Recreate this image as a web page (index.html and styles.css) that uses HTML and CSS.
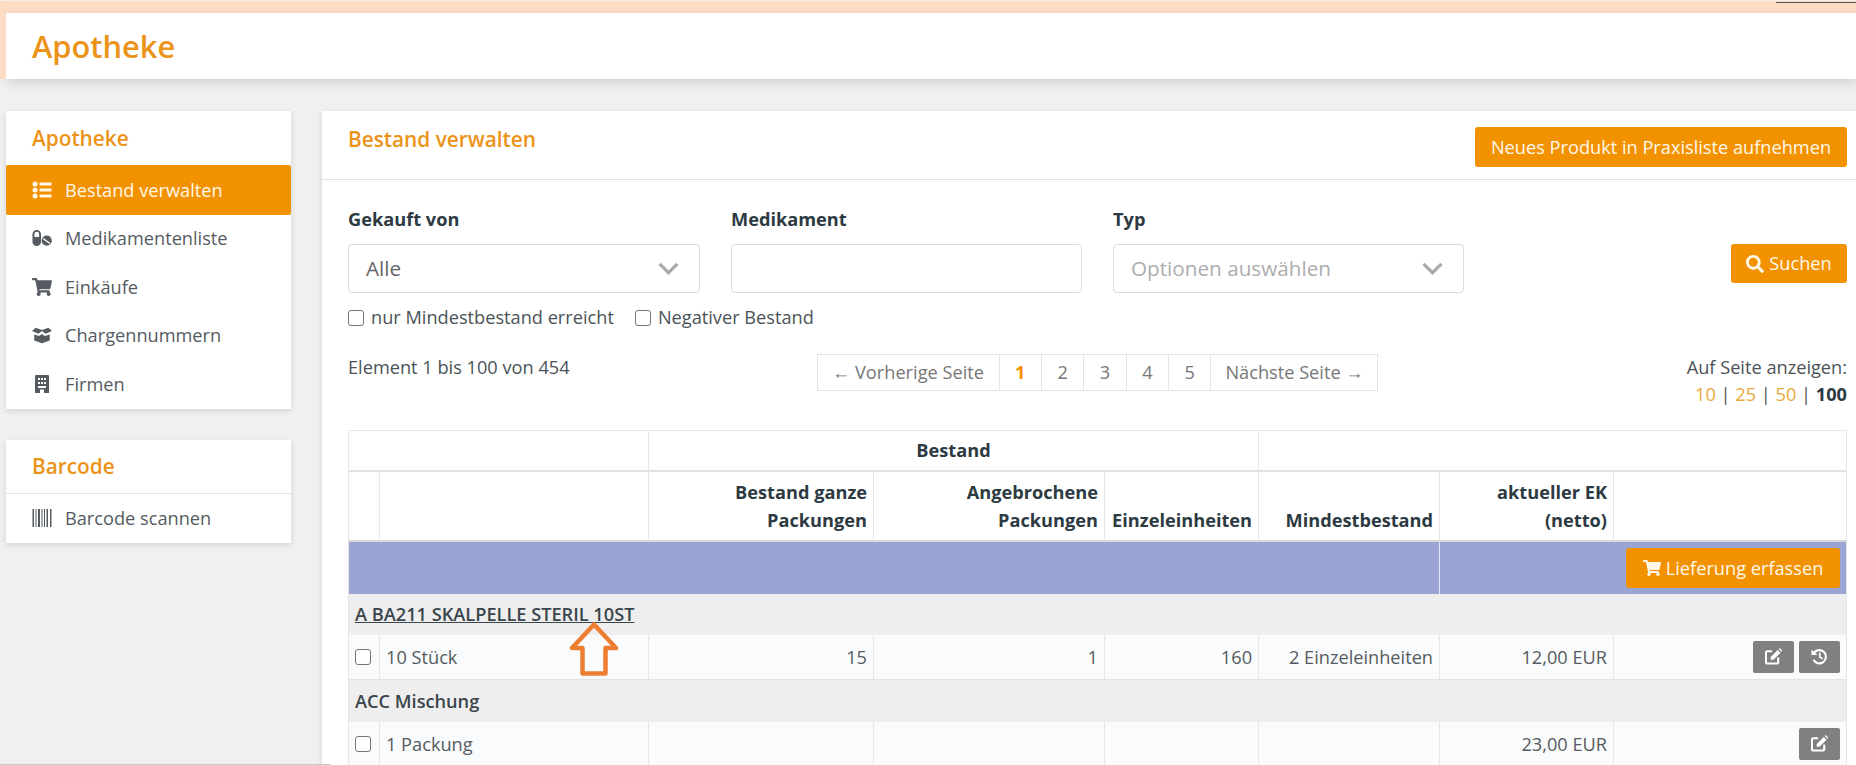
FILE: index.html
```html
<!DOCTYPE html>
<html lang="de">
<head>
<meta charset="utf-8">
<title>Apotheke</title>
<link rel="stylesheet" href="styles.css">
</head>
<body>
<svg class="sprite" aria-hidden="true">
  <symbol id="i-cart" viewBox="0 0 576 512"><path d="M528.12 301.319l47.273-208C578.806 78.301 567.391 64 551.99 64H159.208l-9.166-44.81C147.758 8.021 137.93 0 126.529 0H24C10.745 0 0 10.745 0 24v16c0 13.255 10.745 24 24 24h69.883l70.248 343.435C147.325 417.1 136 435.222 136 456c0 30.928 25.072 56 56 56s56-25.072 56-56c0-15.674-6.447-29.835-16.824-40h209.647C430.447 426.165 424 440.326 424 456c0 30.928 25.072 56 56 56s56-25.072 56-56c0-22.172-12.888-41.332-31.579-50.405l5.517-24.276c3.413-15.018-8.002-29.319-23.403-29.319H218.117l-6.545-32h293.145c11.206 0 20.92-7.754 23.403-18.681z"/></symbol>
  <symbol id="i-search" viewBox="0 0 512 512"><path d="M505 442.7L405.3 343c-4.5-4.5-10.6-7-17-7H372c27.6-35.3 44-79.7 44-128C416 93.1 322.9 0 208 0S0 93.1 0 208s93.1 208 208 208c48.3 0 92.7-16.4 128-44v16.3c0 6.4 2.5 12.5 7 17l99.7 99.7c9.4 9.4 24.6 9.4 33.9 0l28.3-28.3c9.4-9.4 9.4-24.6.1-34zM208 336c-70.7 0-128-57.2-128-128 0-70.7 57.2-128 128-128 70.7 0 128 57.2 128 128 0 70.7-57.2 128-128 128z"/></symbol>
  <symbol id="i-list" viewBox="0 0 20 18"><circle cx="3" cy="3" r="2.5"/><circle cx="3" cy="9" r="2.5"/><circle cx="3" cy="15" r="2.5"/><rect x="7.500" y="1.600" width="12" height="2.800" rx=".6"/><rect x="7.500" y="7.600" width="12" height="2.800" rx=".6"/><rect x="7.500" y="13.600" width="12" height="2.800" rx=".6"/></symbol>
  <symbol id="i-pills" viewBox="0 0 21 18"><path d="M5 0.500a4.500 4.500 0 0 1 4.500 4.500v8a4.500 4.500 0 0 1-9 0v-8a4.500 4.500 0 0 1 4.500-4.500zM2.500 8h5v-3a2.500 2.500 0 0 0-5 0z" fill-rule="evenodd"/><path d="M15.500 6.500a5.300 5.300 0 1 1 0 10.600a5.300 5.300 0 0 1 0-10.600zM12.300 9.300l-.9.9l7 5l.9-.9z" fill-rule="evenodd"/></symbol>
  <symbol id="i-box" viewBox="0 0 22 18"><path d="M0 4.500l4-3.500l7 2.500l7-2.500l4 3.500l-7 3l-4-3l-4 3z"/><path d="M2.500 8.500l5.500 1.500l3-2.200l3 2.200l5.500-1.500v6.500l-8.500 3l-8.500-3z"/></symbol>
  <symbol id="i-building" viewBox="0 0 14 18"><path fill-rule="evenodd" d="M1 0h12a1 1 0 0 1 1 1v17h-5v-3.500h-4v3.500h-5v-17a1 1 0 0 1 1-1zM3 3v2h2v-2zM6 3v2h2v-2zM9 3v2h2v-2zM3 7v2h2v-2zM6 7v2h2v-2zM9 7v2h2v-2zM3 11v2h8v-2z"/></symbol>
  <symbol id="i-barcode" viewBox="0 0 19 18"><path d="M0 0h1.500v18h-1.500zM3 0h1v18h-1zM5.500 0h2v18h-2zM9 0h1v18h-1zM11.500 0h1v18h-1zM14 0h1.500v18h-1.500zM17.500 0h1.500v18h-1.500z"/></symbol>
  <symbol id="i-edit" viewBox="0 0 18 18"><path d="M7.500 3.500h-5a1.500 1.500 0 0 0-1.500 1.500v10a1.500 1.500 0 0 0 1.500 1.500h10a1.500 1.500 0 0 0 1.500-1.500v-5" fill="none" stroke="currentColor" stroke-width="2.200"/><path d="M6 9.500l7.500-7.500l3 3l-7.500 7.500h-3z" fill="currentColor"/><path d="M14.500 1l1-1l3 3l-1 1z" fill="currentColor"/></symbol>
  <symbol id="i-history" viewBox="0 0 18 18"><path d="M3.200 5a7 7 0 1 1-.6 7.500" fill="none" stroke="currentColor" stroke-width="2.200"/><path d="M0.500 1.500l6.500 6h-6.500z" fill="currentColor"/><path d="M9.300 5v4.500l3 2" fill="none" stroke="currentColor" stroke-width="1.800"/></symbol>
</svg>

<div class="app">
  <div class="top-line"></div>
  <header class="page-head"><h1>Apotheke</h1></header>

  <div class="content">
    <aside class="sidebar">
      <nav class="card">
        <h2 class="side-title">Apotheke</h2>
        <a class="side-item active"><svg class="side-icon"><use href="#i-list"/></svg>Bestand verwalten</a>
        <a class="side-item"><svg class="side-icon"><use href="#i-pills"/></svg>Medikamentenliste</a>
        <a class="side-item"><svg class="side-icon"><use href="#i-cart"/></svg>Einkäufe</a>
        <a class="side-item"><svg class="side-icon"><use href="#i-box"/></svg>Chargennummern</a>
        <a class="side-item"><svg class="side-icon"><use href="#i-building"/></svg>Firmen</a>
      </nav>
      <nav class="card">
        <h2 class="side-title ruled">Barcode</h2>
        <a class="side-item"><svg class="side-icon"><use href="#i-barcode"/></svg>Barcode scannen</a>
      </nav>
    </aside>

    <main class="main card">
      <div class="main-head">
        <h2 class="main-title">Bestand verwalten</h2>
        <button class="btn btn-wide">Neues Produkt in Praxisliste aufnehmen</button>
      </div>

      <div class="main-body">
        <form class="filters">
          <div class="field">
            <label class="field-label">Gekauft von</label>
            <div class="select"><span>Alle</span><svg class="chevron" viewBox="0 0 20 12"><path d="M1.500 1.500l8.500 8.500l8.500-8.500"/></svg></div>
          </div>
          <div class="field">
            <label class="field-label">Medikament</label>
            <div class="select"></div>
          </div>
          <div class="field">
            <label class="field-label">Typ</label>
            <div class="select placeholder"><span>Optionen auswählen</span><svg class="chevron" viewBox="0 0 20 12"><path d="M1.500 1.500l8.500 8.500l8.500-8.500"/></svg></div>
          </div>
          <button type="button" class="btn btn-search"><svg class="btn-icon"><use href="#i-search"/></svg>Suchen</button>
        </form>

        <div class="checks">
          <label class="check"><span class="box"></span>nur Mindestbestand erreicht</label>
          <label class="check"><span class="box"></span>Negativer Bestand</label>
        </div>

        <div class="list-bar">
          <div class="count">Element 1 bis 100 von 454</div>
          <div class="pager">
            <span class="pg pg-prev">← Vorherige Seite</span>
            <span class="pg pg-num current">1</span>
            <span class="pg pg-num">2</span>
            <span class="pg pg-num">3</span>
            <span class="pg pg-num">4</span>
            <span class="pg pg-num">5</span>
            <span class="pg pg-next">Nächste Seite →</span>
          </div>
          <div class="per-page">
            <div>Auf Seite anzeigen:</div>
            <div><a>10</a> | <a>25</a> | <a>50</a> | <b>100</b></div>
          </div>
        </div>

        <div class="table-wrap">
          <table class="stock">
            <colgroup>
              <col class="c-check"><col class="c-name"><col class="c-whole"><col class="c-open"><col class="c-unit"><col class="c-min"><col class="c-ek"><col class="c-act">
            </colgroup>
            <thead>
              <tr class="head-1"><th colspan="2"></th><th colspan="3" class="center">Bestand</th><th colspan="3"></th></tr>
              <tr class="head-2"><th></th><th></th><th>Bestand ganze<br>Packungen</th><th>Angebrochene<br>Packungen</th><th>Einzeleinheiten</th><th>Mindestbestand</th><th>aktueller EK<br>(netto)</th><th></th></tr>
            </thead>
            <tbody>
              <tr class="blue"><td colspan="6"></td><td colspan="2" class="blue-act"><button class="btn btn-deliver"><svg class="btn-icon"><use href="#i-cart"/></svg>Lieferung erfassen</button></td></tr>
              <tr class="group first-group"><td colspan="8"><a class="group-link">A BA211 SKALPELLE STERIL 10ST</a></td></tr>
              <tr class="item"><td class="cell-check"><span class="box"></span></td><td>10 Stück</td><td class="num">15</td><td class="num">1</td><td class="num">160</td><td class="num">2 Einzeleinheiten</td><td class="num">12,00 EUR</td><td class="actions"><button class="act"><svg class="act-icon"><use href="#i-edit"/></svg></button><button class="act"><svg class="act-icon"><use href="#i-history"/></svg></button></td></tr>
              <tr class="group"><td colspan="8">ACC Mischung</td></tr>
              <tr class="item"><td class="cell-check"><span class="box"></span></td><td>1 Packung</td><td></td><td></td><td></td><td></td><td class="num">23,00 EUR</td><td class="actions"><button class="act"><svg class="act-icon"><use href="#i-edit"/></svg></button></td></tr>
            </tbody>
          </table>
          <svg class="callout" viewBox="0 0 50 54"><path d="M25 2.500L47 26H36.500V51.500H13.500V26H3z"/></svg>
        </div>
      </div>
    </main>
  </div>
  <div class="corner-line"></div>
  <div class="bottom-line"></div>
</div>
</body>
</html>
```
FILE: styles.css
```css
* { box-sizing: border-box; }
html, body { margin: 0; height: 100%; }
body {
  font-family: "Open Sans", "Liberation Sans", sans-serif;
  font-size: 18.200px;
  line-height: 1.45;
  color: #4a5257;
  background: #f0f0f0;
  overflow: hidden;
}
.sprite { display: none; }
.app { position: relative; height: 765px; overflow: hidden; }

.top-line { height: 13px; background: #fddcc6; border-top: 1px solid #f6ebe4; }
.corner-line { position: absolute; top: 2px; right: 0; width: 80px; height: 1px; background: #555; }
.bottom-line { position: absolute; left: 0; bottom: 0; width: 330px; height: 1px; background: #c9c9c9; }

.page-head {
  height: 66px;
  margin-left: 6px;
  padding-left: 26px;
  display: flex;
  align-items: center;
  background: #fff;
  box-shadow: -6px 0 0 #fddcc6, 0 4px 10px rgba(0,0,0,.13);
  position: relative;
}
.page-head h1 { margin: 0; font-size: 30.800px; font-weight: 600; color: #ea9318; line-height: 1.2; }

.content { display: flex; gap: 31px; padding: 32px 0 0 6px; height: 686px; }
.sidebar { width: 285px; flex: none; display: flex; flex-direction: column; gap: 31px; }
.card { background: #fff; box-shadow: 0 2px 6px rgba(0,0,0,.12); }

.side-title { margin: 0; height: 54px; padding-left: 26px; display: flex; align-items: center; font-size: 20.800px; font-weight: 600; color: #ea9318; }
.side-title.ruled { border-bottom: 1px solid #e4e4e4; }
.side-item { display: flex; align-items: center; height: 48.500px; padding-left: 26px; color: #555b60; }
.card:first-child .side-item:not(.active) { padding-bottom: 2px; }
.side-item.active { height: 50px; background: #f39200; color: #fff8e8; border-radius: 2px; }
.side-icon { width: 20px; height: 18px; margin-right: 13px; fill: currentColor; flex: none; }

.main { flex: 1; min-width: 0; }
.main-head { height: 69px; padding: 16px 9px 0 26px; display: flex; justify-content: space-between; align-items: flex-start; border-bottom: 1px solid #e2e2e2; }
.main-title { margin: 0; font-size: 20.800px; font-weight: 600; color: #ea9318; line-height: 24px; }

.btn { border: 0; border-radius: 3px; background: #f39200; color: #fff8e8; font: inherit; display: inline-flex; align-items: center; justify-content: center; padding: 0; }
.btn-wide { width: 372px; height: 40px; }
.btn-icon { width: 18px; height: 18px; fill: currentColor; margin-right: 5px; flex: none; }

.main-body { padding: 0 9px 0 26px; }
.filters { display: grid; grid-template-columns: 352px 351px 351px 1fr; column-gap: 31px; padding-top: 26px; }
.field-label { display: block; height: 38px; line-height: 27px; font-weight: 700; color: #2d3a42; }
.select {
  height: 49px;
  padding: 0 20px 0 17px;
  display: flex;
  align-items: center;
  justify-content: space-between;
  background: #fff;
  border: 1px solid #dcdcdc;
  border-radius: 4px;
  font-size: 20.700px;
  color: #666;
}
.select.placeholder { color: #adadad; }
.chevron { width: 21px; height: 13px; fill: none; stroke: #a9a9a9; stroke-width: 3; }
.btn-search { width: 116px; height: 39px; margin-top: 38px; justify-self: end; }

.checks { display: flex; gap: 21px; margin-top: 12px; height: 25px; align-items: center; }
.check { display: flex; align-items: center; color: #4a5257; }
.box { display: inline-block; width: 16px; height: 16px; border: 1px solid #757575; border-radius: 3px; background: #fff; margin-right: 7px; flex: none; }

.list-bar { display: grid; grid-template-columns: 1fr auto 1fr; margin-top: 24px; height: 76px; }
.count { padding-top: 0; }
.pager { display: flex; height: 37px; margin-top: 0; border: 1px solid #e4e4e4; color: #777; }
.pg { display: flex; align-items: center; justify-content: center; border-left: 1px solid #e4e4e4; }
.pg:first-child { border-left: 0; }
.pg-prev { width: 181px; }
.pg-num { width: 42.400px; }
.pg-next { width: 167px; }
.current { color: #f39200; font-weight: 700; }
.per-page { text-align: right; line-height: 27px; }
.per-page a { color: #e9a93c; }
.per-page b { color: #2d3a42; }

.table-wrap { position: relative; }
.stock { width: 1498px; table-layout: fixed; border-collapse: collapse; border: 1px solid #e6e6e6; }
.c-check { width: 31px; }
.c-name { width: 269px; }
.c-whole { width: 225px; }
.c-open { width: 231px; }
.c-unit { width: 154px; }
.c-min { width: 181px; }
.c-ek { width: 174px; }
.c-act { width: 233px; }
.stock th, .stock td { padding: 0 6px; border-left: 1px solid #e6e6e6; line-height: 28px; }
.stock th:first-child, .stock td:first-child { border-left: 0; }
.stock th { font-weight: 700; color: #2d3a42; text-align: right; vertical-align: bottom; background: #fff; }
.stock th.center { text-align: center; vertical-align: middle; }
.head-1 { height: 40px; border-bottom: 2px solid #e2e2e2; }
.head-2 { height: 70px; border-bottom: 2px solid #d8d8d8; }
.head-2 th { padding-bottom: 6px; }
.blue { height: 53px; background: #9ba5d3; }
.stock .blue td { border-left: 0; }
.stock .blue .blue-act { border-left: 1px solid #e6e9f5; text-align: right; padding-right: 6px; }
.btn-deliver { width: 214px; height: 40px; }
.group { height: 42px; background: #eeeeee; color: #3a454c; }
.first-group { height: 41px; }
.group td { font-weight: 600; }
.group-link { text-decoration: underline; }
.item { height: 45px; background: #fafbfc; border-bottom: 1px solid #e4e4e4; }
.item td { color: #555b60; }
.item .num { text-align: right; }
.cell-check .box { display: block; margin: 0; }
.actions { text-align: right; white-space: nowrap; font-size: 0; }
.act { width: 41px; height: 32px; border: 0; border-radius: 2px; background: #808080; color: #fff; margin-left: 5px; padding: 0; vertical-align: middle; }
.act-icon { width: 17px; height: 17px; display: block; margin: 0 auto; }
.callout { position: absolute; left: 221px; top: 192px; width: 50px; height: 54px; fill: none; stroke: #ed7d31; stroke-width: 4.500; stroke-linejoin: round; }
```
